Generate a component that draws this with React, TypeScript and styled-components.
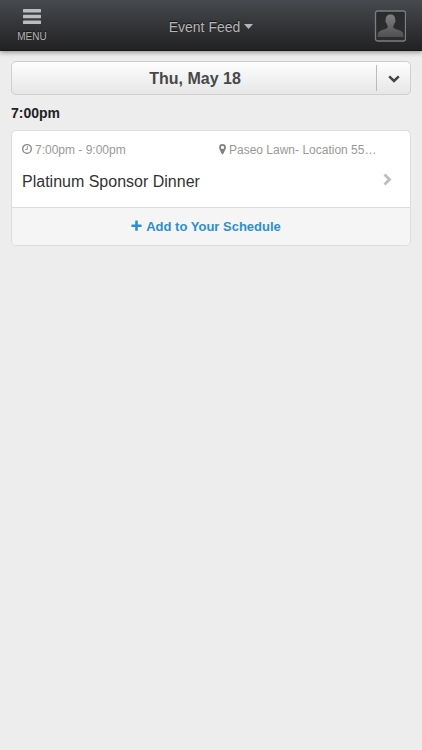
import React from "react";
import styled, { createGlobalStyle } from "styled-components";

const GlobalStyle = createGlobalStyle`
  *, *::before, *::after { box-sizing: border-box; }
  body {
    margin: 0;
    background: #ededed;
    font-family: "Liberation Sans", Arial, Helvetica, sans-serif;
    color: #333;
  }
  button {
    margin: 0;
    padding: 0;
    border: 0;
    background: none;
    font: inherit;
    color: inherit;
    cursor: pointer;
  }
  svg { display: block; flex: none; }
`;

const TopBar = styled.header`
  display: grid;
  grid-template-columns: 64px 1fr 64px;
  align-items: center;
  height: 51px;
  background: linear-gradient(#474a4e, #343538 50%, #222224);
  border-bottom: 1px solid #19191a;
  box-shadow: 0 1px 5px rgba(0, 0, 0, 0.45);
  color: #b5b5b6;
`;

const MenuButton = styled.button`
  display: flex;
  flex-direction: column;
  align-items: center;
  gap: 6px;
  padding-top: 1px;
  font-size: 10px;
  line-height: 12px;
  text-shadow: 0 -1px 1px #111;
`;

const FeedButton = styled.button`
  display: flex;
  justify-content: center;
  align-items: center;
  justify-self: center;
  gap: 4px;
  padding-top: 4px;
  font-size: 14px;
  line-height: 18px;
  text-shadow: 0 -1px 1px #111;
`;

const ProfileButton = styled.button`
  justify-self: center;
  padding-top: 1px;
`;

const Content = styled.main`
  padding: 10px 11px;
`;

const DayPicker = styled.div`
  display: flex;
  align-items: center;
  height: 34px;
  border: 1px solid #cfcfcf;
  border-radius: 5px;
  background: linear-gradient(#fefefe, #e6e6e6);
`;

const DayButton = styled.button`
  flex: 1;
  height: 100%;
  padding: 2px 0 0 2px;
  font-size: 16px;
  line-height: 20px;
  font-weight: bold;
  color: #484848;
`;

const DayToggle = styled.button`
  display: flex;
  align-items: center;
  justify-content: center;
  width: 34px;
  height: 26px;
  padding-top: 2px;
  border-left: 1px solid #bbb;
  color: #444;
`;

const TimeHeading = styled.h2`
  margin: 9px 0 8px;
  font-size: 14px;
  line-height: 18px;
  color: #222;
`;

const Card = styled.article`
  border: 1px solid #dcdcdc;
  border-radius: 5px;
  background: #fff;
  overflow: hidden;
`;

const EventLink = styled.a`
  display: block;
  padding: 10px 18px 14px 10px;
  color: inherit;
  text-decoration: none;
`;

const MetaRow = styled.div`
  display: grid;
  grid-template-columns: 1fr 1fr;
  gap: 24px;
`;

const Meta = styled.span`
  display: flex;
  align-items: center;
  gap: 3px;
  font-size: 12px;
  line-height: 18px;
  white-space: nowrap;
  color: #999;
`;

const TitleRow = styled.div`
  display: flex;
  align-items: start;
  justify-content: space-between;
  margin-top: 12px;
`;

const Title = styled.h3`
  margin: 0;
  font-size: 16px;
  line-height: 22px;
  font-weight: normal;
  color: #333;
`;

const AddButton = styled.button`
  display: flex;
  align-items: center;
  justify-content: center;
  gap: 4px;
  width: 100%;
  height: 38px;
  padding-right: 10px;
  border-top: 1px solid #dcdcdc;
  background: #f5f5f5;
  font-size: 13px;
  line-height: 18px;
  font-weight: bold;
  color: #2d8fd0;
`;

const MenuIcon = () => (
  <svg width="18" height="16" viewBox="0 0 18 16" fill="#bdbdbf" aria-hidden="true">
    <rect y="0" width="18" height="3.400" rx="0.600" />
    <rect y="5.800" width="18" height="3.400" rx="0.600" />
    <rect y="11.600" width="18" height="3.400" rx="0.600" />
  </svg>
);

const CaretIcon = () => (
  <svg width="9" height="7" viewBox="0 0 9 7" fill="currentColor" aria-hidden="true">
    <path d="M0 0h9L4.500 5z" />
  </svg>
);

const ProfileIcon = () => (
  <svg width="32" height="32" viewBox="0 0 32 32" aria-hidden="true">
    <defs>
      <linearGradient id="person" x1="0" y1="0" x2="0" y2="1">
        <stop offset="0" stopColor="#808080" />
        <stop offset="1" stopColor="#505050" />
      </linearGradient>
    </defs>
    <rect x="1.500" y="1" width="30" height="30" rx="2" fill="#2b2c2e" stroke="#7d7e80" strokeWidth="1.300" />
    <path
      d="M16.500 4.500c-3.100 0-4.900 2-4.700 5.300-.8.600-.2 2.800.6 3.300.3 1.500.8 2.200 1.300 2.900 0 1.500-.1 2-1 2.500-2.600 1.200-6.200 1.600-7.900 3.400-1.200 1.300-1.300 3.500-1.300 5.100h26c0-1.600-.1-3.800-1.300-5.100-1.700-1.800-5.300-2.200-7.900-3.400-.9-.5-1-1-1-2.500.5-.7 1-1.400 1.300-2.900.8-.5 1.400-2.700.6-3.300.2-3.300-1.600-5.300-4.700-5.300z"
      fill="url(#person)"
    />
  </svg>
);

const ChevronDownIcon = () => (
  <svg width="12" height="8" viewBox="0 0 12 8" fill="none" aria-hidden="true">
    <path d="M1.200 1.400L6 6l4.800-4.600" stroke="currentColor" strokeWidth="2.500" />
  </svg>
);

const ChevronRightIcon = () => (
  <svg width="9" height="16" viewBox="0 0 9 16" fill="none" aria-hidden="true">
    <path d="M1.500 3.500L6.500 8.500l-5 5" stroke="#bdbdbd" strokeWidth="2.800" />
  </svg>
);

const ClockIcon = () => (
  <svg width="10" height="14" viewBox="0 0 10 14" fill="none" stroke="#8a8a8a" aria-hidden="true">
    <circle cx="5" cy="5.900" r="4.300" strokeWidth="1.400" />
    <path d="M5.400 3.200v3.200H3.200" strokeWidth="0.900" />
  </svg>
);

const PinIcon = () => (
  <svg width="7" height="14" viewBox="0 0 7 14" aria-hidden="true">
    <path
      fill="#808080"
      fillRule="evenodd"
      d="M3.500 1A3.400 3.400 0 0 0 .1 4.400c0 .6.100 1.100.3 1.500l2.400 5.100c.3.600 1.100.6 1.400 0l2.400-5.100c.2-.4.300-.9.300-1.500A3.400 3.400 0 0 0 3.500 1zm0 1.800a1.650 1.650 0 1 1 0 3.300 1.650 1.650 0 0 1 0-3.300z"
    />
  </svg>
);

const PlusIcon = () => (
  <svg width="11" height="14" viewBox="0 0 11 14" fill="currentColor" aria-hidden="true">
    <path d="M4.800.600h1.400q.6 0 .6.600v3.200h3.200q.6 0 .6.600v1.400q0 .6-.6.600H6.800v3.200q0 .6-.6.600H4.800q-.6 0-.6-.6V7H1q-.6 0-.6-.6V5q0-.6.600-.6h3.200V1.200q0-.6.600-.6z" />
  </svg>
);

export default function App() {
  return (
    <>
      <GlobalStyle />
      <TopBar>
        <MenuButton>
          <MenuIcon />
          MENU
        </MenuButton>
        <FeedButton>
          Event Feed
          <CaretIcon />
        </FeedButton>
        <ProfileButton aria-label="Profile">
          <ProfileIcon />
        </ProfileButton>
      </TopBar>
      <Content>
        <DayPicker>
          <DayButton>Thu, May 18</DayButton>
          <DayToggle aria-label="Choose day">
            <ChevronDownIcon />
          </DayToggle>
        </DayPicker>
        <TimeHeading>7:00pm</TimeHeading>
        <Card>
          <EventLink href="#event">
            <MetaRow>
              <Meta>
                <ClockIcon />
                7:00pm - 9:00pm
              </Meta>
              <Meta>
                <PinIcon />
                Paseo Lawn- Location 55…
              </Meta>
            </MetaRow>
            <TitleRow>
              <Title>Platinum Sponsor Dinner</Title>
              <ChevronRightIcon />
            </TitleRow>
          </EventLink>
          <AddButton>
            <PlusIcon />
            Add to Your Schedule
          </AddButton>
        </Card>
      </Content>
    </>
  );
}
